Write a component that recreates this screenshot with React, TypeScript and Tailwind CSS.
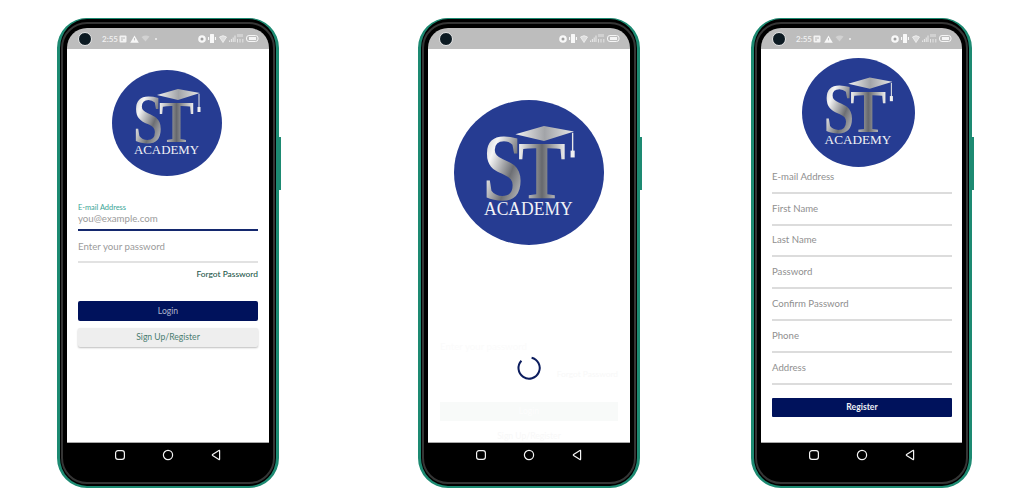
const font = "font-['Lato','Open_Sans',sans-serif]";

function Logo({ width, height }: { width: number; height: number }) {
  return (
    <svg width={width} height={height} viewBox="0 0 110 106" preserveAspectRatio="none" className="block">
      <defs>
        <linearGradient id="silver" x1="0" y1="0" x2="1" y2="1">
          <stop offset="0" stopColor="#a4a6aa" />
          <stop offset="0.3" stopColor="#f6f6f6" />
          <stop offset="0.62" stopColor="#6d6f74" />
          <stop offset="1" stopColor="#ececec" />
        </linearGradient>
        <linearGradient id="silverT" x1="0" y1="0" x2="1" y2="0">
          <stop offset="0" stopColor="#f6f6f6" />
          <stop offset="0.5" stopColor="#66686d" />
          <stop offset="1" stopColor="#f2f2f2" />
        </linearGradient>
        <linearGradient id="board" x1="0" y1="0" x2="1" y2="0">
          <stop offset="0" stopColor="#f4f4f4" />
          <stop offset="0.5" stopColor="#a2a4a8" />
          <stop offset="1" stopColor="#e8e8e8" />
        </linearGradient>
      </defs>
      <ellipse cx="55" cy="53" rx="55" ry="53" fill="#263c92" />
      <text x="21" y="73" fontFamily="'Liberation Serif', serif" fontWeight="700" fontSize="70" textLength="30" lengthAdjust="spacingAndGlyphs" fill="url(#silver)">
        S
      </text>
      <text x="47" y="72" fontFamily="'Liberation Serif', serif" fontWeight="700" fontSize="60" textLength="35" lengthAdjust="spacingAndGlyphs" fill="url(#silverT)">
        T
      </text>
      <polygon points="45,25 66,19 88,23 66,30" fill="url(#board)" />
      <path d="M87 24 L87 38" stroke="#e8e8e8" strokeWidth="1" />
      <rect x="85.5" y="37" width="3" height="5" fill="#f0f0f0" />
      <text x="22" y="84" fontFamily="'Liberation Serif', serif" fontSize="13" textLength="65" lengthAdjust="spacingAndGlyphs" fill="#f1f2f6">
        ACADEMY
      </text>
    </svg>
  );
}

function StatusLeft() {
  return (
    <div className="ml-[35px] flex items-center">
      <span className="w-[16px] text-[8px] font-semibold leading-none text-[#f2f2f2]">2:55</span>
      <svg width="8" height="8" viewBox="0 0 8 8" className="ml-[1px]">
        <rect x="0.5" y="0.5" width="7" height="7" rx="1" fill="#f2f2f2" />
        <path d="M2 3h4M2 5h2" stroke="#a8a8a8" strokeWidth="0.8" />
      </svg>
      <svg width="9" height="8" viewBox="0 0 9 8" className="ml-[3px]">
        <path d="M4.5 0.5 L8.8 7.7 H0.2 Z" fill="#f7f7f7" />
        <path d="M4.5 3v2.4" stroke="#bdbdbd" strokeWidth="0.9" />
      </svg>
      <svg width="9" height="7" viewBox="0 0 9 7" className="ml-[2px]">
        <path d="M0.5 2 Q4.5 -0.5 8.5 1.5 L4.5 6.5 Z" fill="#d2d2d2" />
      </svg>
      <span className="ml-[5px] h-[2px] w-[2px] rounded-full bg-[#f2f2f2]" />
    </div>
  );
}

function StatusRight() {
  return (
    <div className="ml-auto mr-[10px] flex items-center">
      <svg width="8" height="8" viewBox="0 0 8 8">
        <circle cx="4" cy="4" r="3.8" fill="#f8f8f8" />
        <circle cx="4" cy="4" r="1.5" fill="#a0a0a0" />
      </svg>
      <svg width="8" height="9" viewBox="0 0 8 9" className="ml-[2px]">
        <rect x="2" y="0" width="4" height="9" rx="0.6" fill="#f8f8f8" />
        <path d="M0.5 3v3M7.5 3v3" stroke="#f8f8f8" strokeWidth="1.2" />
      </svg>
      <svg width="8" height="8" viewBox="0 0 8 8" className="ml-[3px]">
        <path d="M0.5 2 Q4 -0.6 7.5 2 L4 7.5 Z" fill="#dedede" stroke="#f2f2f2" strokeWidth="0.8" />
      </svg>
      <svg width="7" height="7" viewBox="0 0 7 7" className="ml-[2px]">
        <path d="M0.6 7V5.5M2.4 7V4M4.2 7V2.5M6 7V0.5" stroke="#eaeaea" strokeWidth="1" />
      </svg>
      <svg width="7" height="9" viewBox="0 0 7 9" className="ml-[1px]">
        <path d="M1 0v3M3 0v3M5 0v3M0.5 5v3.5M3 5v3.5M5.8 5v3.5" stroke="#eaeaea" strokeWidth="0.9" />
      </svg>
      <svg width="13" height="7" viewBox="0 0 13 7" className="ml-[2px]">
        <rect x="0.5" y="0.5" width="11.5" height="6" rx="2.5" fill="none" stroke="#f5f5f5" />
        <rect x="3" y="2" width="7" height="3" fill="#f5f5f5" />
      </svg>
    </div>
  );
}

function NavBar() {
  return (
    <div className="flex h-[39px] items-start justify-center gap-[32px] pt-[6px]">
      <svg width="16" height="12" viewBox="0 0 16 12">
        <rect x="3.6" y="1.6" width="8.8" height="8.8" rx="2.4" fill="none" stroke="#f4f4f4" strokeWidth="1.2" />
      </svg>
      <svg width="16" height="12" viewBox="0 0 16 12">
        <circle cx="8" cy="6" r="4.6" fill="none" stroke="#f4f4f4" strokeWidth="1.2" />
      </svg>
      <svg width="16" height="12" viewBox="0 0 16 12">
        <path d="M11.6 1.8 V10.2 Q11.6 10.9 10.9 10.5 L4.6 6.5 Q4 6 4.6 5.5 L10.9 1.5 Q11.6 1.1 11.6 1.8 Z" fill="none" stroke="#f4f4f4" strokeWidth="1.2" />
      </svg>
    </div>
  );
}

function Phone({ left = true, className = "", children }: { left?: boolean; className?: string; children: React.ReactNode }) {
  return (
    <div className={`relative h-[470px] shrink-0 rounded-[30px] border-x-[3px] border-t border-b-2 border-[#1d8a72] bg-black px-[1px] pt-[3px] pb-[2px] ${className}`}>
      <div className="h-full rounded-[26px] border-2 border-[#353535] bg-black px-[4px] pt-[4px]">
        <div className="overflow-hidden rounded-t-[20px]">
          <div className="relative flex h-[21px] items-center bg-[#bdbdbd]">
            <span className="absolute left-[11px] top-[4px] h-[14px] w-[14px] rounded-full border-[1.5px] border-[#e8e8e8] bg-[#0c1a22]" />
            {left && <StatusLeft />}
            <StatusRight />
          </div>
          <div className="relative h-[394px] border-b border-[#a8a8a8] bg-white">{children}</div>
        </div>
        <NavBar />
      </div>
      <span className="absolute right-[-5px] top-[118px] h-[53px] w-[2px] bg-[#1d8a72]" />
    </div>
  );
}

function LoginScreen() {
  return (
    <div className="flex flex-col px-[11px] pt-[21px]">
      <div className="flex justify-center pr-[2px]">
        <Logo width={110} height={106} />
      </div>
      <div className="mt-[27px] text-[7.4px] leading-[10px] text-[#3aa596]">E-mail Address</div>
      <div className="h-[16px] text-[9.7px] leading-[10px] text-[#9b9b9b]">you@example.com</div>
      <div className="h-[2px] bg-[#14286e]" />
      <div className="mt-[8px] h-[22px] text-[9.7px] leading-[14px] text-[#9b9b9b]">Enter your password</div>
      <div className="h-[2px] bg-[#e2e2e2]" />
      <div className="mt-[5px] text-right text-[8.4px] leading-[12px] font-medium text-[#24584c]">Forgot Password</div>
      <div className="mt-[21px] flex h-[20px] items-center justify-center rounded-[2px] bg-[#00125c] text-[8.6px] text-[#aeb6cf]">Login</div>
      <div className="mt-[7px] flex h-[19px] items-center justify-center rounded-[2px] bg-[#eeeeee] text-[8.6px] text-[#4a7d71] shadow-[0_1px_2px_#bdbdbd]">
        Sign Up/Register
      </div>
    </div>
  );
}

function SplashScreen() {
  return (
    <div className="flex flex-col items-center pt-[51px]">
      {/* login form fading in behind the spinner */}
      <div className="absolute inset-x-0 top-[290px] flex flex-col px-[12px] text-[#fbfbfb]">
        <div className="text-[9.7px] leading-[14px]">Enter your password</div>
        <div className="mt-[15px] text-right text-[8.4px] leading-[12px] text-[#f8f8f8]">Forgot Password</div>
        <div className="mt-[22px] flex h-[19px] items-center justify-center bg-[#f8faf9] text-[8.6px] text-[#fdfdfd]">Login</div>
        <div className="mt-[9px] text-center text-[8.6px] leading-[12px] text-[#f8f8f8]">Sign Up/Register</div>
      </div>
      <Logo width={150} height={145} />
      <svg width="26" height="26" viewBox="0 0 26 26" className="relative mt-[110px]">
        <path d="M15.6 2.7 A10.6 10.6 0 1 1 5.4 5.7" fill="none" stroke="#0c1d5e" strokeWidth="2" />
      </svg>
    </div>
  );
}

const fields = ["E-mail Address", "First Name", "Last Name", "Password", "Confirm Password", "Phone", "Address"];

function RegisterScreen() {
  return (
    <div className="flex flex-col pl-[11px] pr-[10px] pt-[9px]">
      <div className="flex justify-center pr-[7px]">
        <Logo width={113} height={109} />
      </div>
      <div className="mt-[-5px] flex flex-col">
        {fields.map((name) => (
          <div key={name} className="flex h-[31.8px] flex-col justify-end">
            <div className="h-[22px] text-[9.6px] leading-[14px] text-[#8f8f8f]">{name}</div>
            <div className="h-[2px] bg-[#dcdcdc]" />
          </div>
        ))}
      </div>
      <div className="mt-[13px] flex h-[19px] items-center justify-center rounded-[1px] bg-[#00125c] text-[8.6px] font-bold text-[#eef0f6]">Register</div>
    </div>
  );
}

export default function App() {
  return (
    <div className={`flex h-[500px] w-[1024px] items-start overflow-hidden bg-white pl-[57px] pt-[18px] ${font}`}>
      <Phone className="w-[222px]">
        <LoginScreen />
      </Phone>
      <Phone left={false} className="ml-[139px] w-[222px]">
        <SplashScreen />
      </Phone>
      <Phone className="ml-[111px] w-[221px]">
        <RegisterScreen />
      </Phone>
    </div>
  );
}
